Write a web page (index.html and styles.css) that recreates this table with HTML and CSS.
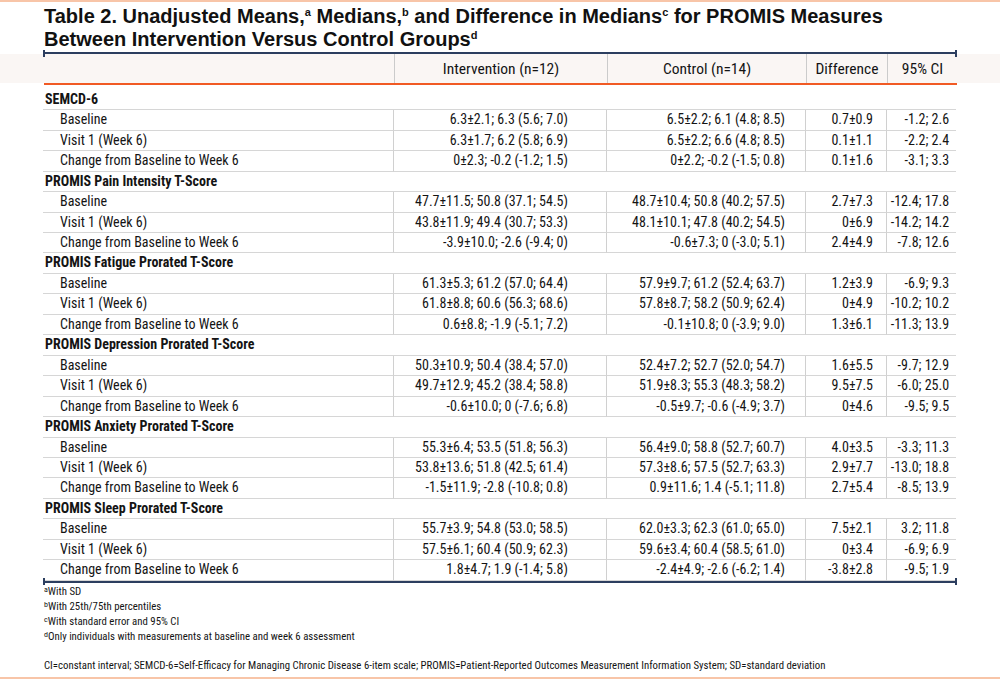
FILE: index.html
```html
<!DOCTYPE html>
<html lang="en">
<head>
<meta charset="utf-8">
<title>Table 2</title>
<link rel="stylesheet" href="styles.css">
</head>
<body>
<div class="page">
  <h1 class="title">Table 2. Unadjusted Means,<span class="tsup">a</span> Medians,<span class="tsup">b</span> and Difference in Medians<span class="tsup">c</span> for PROMIS Measures<br>Between Intervention Versus Control Groups<span class="tsup">d</span></h1>
  <div class="rule"></div>
  <div class="band">
    <table class="grid head">
      <colgroup><col class="w0"><col class="w1"><col class="w2"><col class="w3"><col class="w4"></colgroup>
      <tr><th></th><th>Intervention (n=12)</th><th>Control (n=14)</th><th>Difference</th><th>95% CI</th></tr>
    </table>
  </div>
  <div class="orange"></div>
  <table class="grid data">
    <colgroup><col class="w0"><col class="w1"><col class="w2"><col class="w3"><col class="w4"></colgroup>
    <tr class="grp"><td colspan="5">SEMCD-6</td></tr>
    <tr><td class="lab">Baseline</td><td class="c1">6.3±2.1; 6.3 (5.6; 7.0)</td><td class="c2">6.5±2.2; 6.1 (4.8; 8.5)</td><td class="c3">0.7±0.9</td><td class="c4">-1.2; 2.6</td></tr>
    <tr><td class="lab">Visit 1 (Week 6)</td><td class="c1">6.3±1.7; 6.2 (5.8; 6.9)</td><td class="c2">6.5±2.2; 6.6 (4.8; 8.5)</td><td class="c3">0.1±1.1</td><td class="c4">-2.2; 2.4</td></tr>
    <tr><td class="lab">Change from Baseline to Week 6</td><td class="c1">0±2.3; -0.2 (-1.2; 1.5)</td><td class="c2">0±2.2; -0.2 (-1.5; 0.8)</td><td class="c3">0.1±1.6</td><td class="c4">-3.1; 3.3</td></tr>
    <tr class="grp"><td colspan="5">PROMIS Pain Intensity T-Score</td></tr>
    <tr><td class="lab">Baseline</td><td class="c1">47.7±11.5; 50.8 (37.1; 54.5)</td><td class="c2">48.7±10.4; 50.8 (40.2; 57.5)</td><td class="c3">2.7±7.3</td><td class="c4">-12.4; 17.8</td></tr>
    <tr><td class="lab">Visit 1 (Week 6)</td><td class="c1">43.8±11.9; 49.4 (30.7; 53.3)</td><td class="c2">48.1±10.1; 47.8 (40.2; 54.5)</td><td class="c3">0±6.9</td><td class="c4">-14.2; 14.2</td></tr>
    <tr><td class="lab">Change from Baseline to Week 6</td><td class="c1">-3.9±10.0; -2.6 (-9.4; 0)</td><td class="c2">-0.6±7.3; 0 (-3.0; 5.1)</td><td class="c3">2.4±4.9</td><td class="c4">-7.8; 12.6</td></tr>
    <tr class="grp"><td colspan="5">PROMIS Fatigue Prorated T-Score</td></tr>
    <tr><td class="lab">Baseline</td><td class="c1">61.3±5.3; 61.2 (57.0; 64.4)</td><td class="c2">57.9±9.7; 61.2 (52.4; 63.7)</td><td class="c3">1.2±3.9</td><td class="c4">-6.9; 9.3</td></tr>
    <tr><td class="lab">Visit 1 (Week 6)</td><td class="c1">61.8±8.8; 60.6 (56.3; 68.6)</td><td class="c2">57.8±8.7; 58.2 (50.9; 62.4)</td><td class="c3">0±4.9</td><td class="c4">-10.2; 10.2</td></tr>
    <tr><td class="lab">Change from Baseline to Week 6</td><td class="c1">0.6±8.8; -1.9 (-5.1; 7.2)</td><td class="c2">-0.1±10.8; 0 (-3.9; 9.0)</td><td class="c3">1.3±6.1</td><td class="c4">-11.3; 13.9</td></tr>
    <tr class="grp"><td colspan="5">PROMIS Depression Prorated T-Score</td></tr>
    <tr><td class="lab">Baseline</td><td class="c1">50.3±10.9; 50.4 (38.4; 57.0)</td><td class="c2">52.4±7.2; 52.7 (52.0; 54.7)</td><td class="c3">1.6±5.5</td><td class="c4">-9.7; 12.9</td></tr>
    <tr><td class="lab">Visit 1 (Week 6)</td><td class="c1">49.7±12.9; 45.2 (38.4; 58.8)</td><td class="c2">51.9±8.3; 55.3 (48.3; 58.2)</td><td class="c3">9.5±7.5</td><td class="c4">-6.0; 25.0</td></tr>
    <tr><td class="lab">Change from Baseline to Week 6</td><td class="c1">-0.6±10.0; 0 (-7.6; 6.8)</td><td class="c2">-0.5±9.7; -0.6 (-4.9; 3.7)</td><td class="c3">0±4.6</td><td class="c4">-9.5; 9.5</td></tr>
    <tr class="grp"><td colspan="5">PROMIS Anxiety Prorated T-Score</td></tr>
    <tr><td class="lab">Baseline</td><td class="c1">55.3±6.4; 53.5 (51.8; 56.3)</td><td class="c2">56.4±9.0; 58.8 (52.7; 60.7)</td><td class="c3">4.0±3.5</td><td class="c4">-3.3; 11.3</td></tr>
    <tr><td class="lab">Visit 1 (Week 6)</td><td class="c1">53.8±13.6; 51.8 (42.5; 61.4)</td><td class="c2">57.3±8.6; 57.5 (52.7; 63.3)</td><td class="c3">2.9±7.7</td><td class="c4">-13.0; 18.8</td></tr>
    <tr><td class="lab">Change from Baseline to Week 6</td><td class="c1">-1.5±11.9; -2.8 (-10.8; 0.8)</td><td class="c2">0.9±11.6; 1.4 (-5.1; 11.8)</td><td class="c3">2.7±5.4</td><td class="c4">-8.5; 13.9</td></tr>
    <tr class="grp"><td colspan="5">PROMIS Sleep Prorated T-Score</td></tr>
    <tr><td class="lab">Baseline</td><td class="c1">55.7±3.9; 54.8 (53.0; 58.5)</td><td class="c2">62.0±3.3; 62.3 (61.0; 65.0)</td><td class="c3">7.5±2.1</td><td class="c4">3.2; 11.8</td></tr>
    <tr><td class="lab">Visit 1 (Week 6)</td><td class="c1">57.5±6.1; 60.4 (50.9; 62.3)</td><td class="c2">59.6±3.4; 60.4 (58.5; 61.0)</td><td class="c3">0±3.4</td><td class="c4">-6.9; 6.9</td></tr>
    <tr><td class="lab">Change from Baseline to Week 6</td><td class="c1">1.8±4.7; 1.9 (-1.4; 5.8)</td><td class="c2">-2.4±4.9; -2.6 (-6.2; 1.4)</td><td class="c3">-3.8±2.8</td><td class="c4">-9.5; 1.9</td></tr>
  </table>
  <div class="rule"></div>
  <div class="notes">
    <p><span class="nsup">a</span>With SD</p>
    <p><span class="nsup">b</span>With 25th/75th percentiles</p>
    <p><span class="nsup">c</span>With standard error and 95% CI</p>
    <p><span class="nsup">d</span>Only individuals with measurements at baseline and week 6 assessment</p>
    <p class="abbr">CI=constant interval; SEMCD-6=Self-Efficacy for Managing Chronic Disease 6-item scale; PROMIS=Patient-Reported Outcomes Measurement Information System; SD=standard deviation</p>
  </div>
</div>
</body>
</html>
```

FILE: styles.css
```css
html, body {
  margin: 0;
  padding: 0;
}
body {
  width: 1000px;
  height: 679px;
  box-sizing: border-box;
  border-top: 2px solid #f8c5a8;
  border-bottom: 2px solid #f8c5a8;
  background: #ffffff;
  color: #141414;
  font-family: "Roboto Condensed", "DejaVu Sans Condensed", Roboto, "Liberation Sans", sans-serif;
  font-stretch: condensed;
  overflow: hidden;
}
.page {
  display: flex;
  flex-direction: column;
}
.title {
  margin: 3px 0 0 44px;
  font-family: "Liberation Sans", Arial, sans-serif;
  font-stretch: normal;
  font-weight: bold;
  font-size: 20px;
  line-height: 22.5px;
  color: #111111;
}
.tsup {
  font-size: 11px;
  line-height: 0;
  vertical-align: 7px;
}
.rule {
  position: relative;
  margin: 2px 0 0 43px;
  width: 914px;
  height: 2px;
  background: #2c3e5f;
}
.rule::before,
.rule::after {
  content: "";
  position: absolute;
  top: -2.5px;
  width: 2px;
  height: 7px;
  background: #2c3e5f;
}
.rule::before { left: 0; }
.rule::after { right: 0; }
.band {
  background: #faf6f4;
  padding-left: 44px;
}
.grid {
  table-layout: fixed;
  width: 913px;
  border-collapse: separate;
  border-spacing: 0;
}
.w0 { width: 351px; }
.w1 { width: 213px; }
.w2 { width: 199px; }
.w3 { width: 81px; }
.w4 { width: 69px; }
.head th {
  height: 29px;
  padding: 0;
  font-weight: normal;
  font-size: 15.5px;
  text-align: center;
  border-right: 1px solid #cbcbcb;
  white-space: nowrap;
}
.head th:last-child { border-right: none; }
.orange {
  margin-left: 44px;
  width: 913px;
  height: 2px;
  background: #f15a24;
}
.data {
  margin: 4.8px 0 0 43px;
  font-size: 14px;
}
.data td {
  padding: 0;
  line-height: 19.45px;
  border-bottom: 1px solid #d6d6d6;
  white-space: nowrap;
  text-align: right;
}
.data .grp td {
  text-align: left;
  font-weight: bold;
  padding-left: 2px;
}
.data td.lab {
  text-align: left;
  padding-left: 17px;
}
.data td.lab, .data td.c1, .data td.c2, .data td.c3 {
  border-right: 1px solid #d0d0d0;
}
.data td.c1 { padding-right: 38px; }
.data td.c2 { padding-right: 20px; }
.data td.c3 { padding-right: 13px; }
.data td.c4 { padding-right: 7px; }
.data + .rule { margin-top: 0; }
.notes {
  padding-left: 44px;
  font-size: 10.8px;
  line-height: 15px;
  margin-top: 1px;
}
.notes p { margin: 0; }
.nsup {
  font-size: 8px;
  line-height: 0;
  vertical-align: 3.5px;
}
.notes .abbr { margin-top: 14px; }
```
